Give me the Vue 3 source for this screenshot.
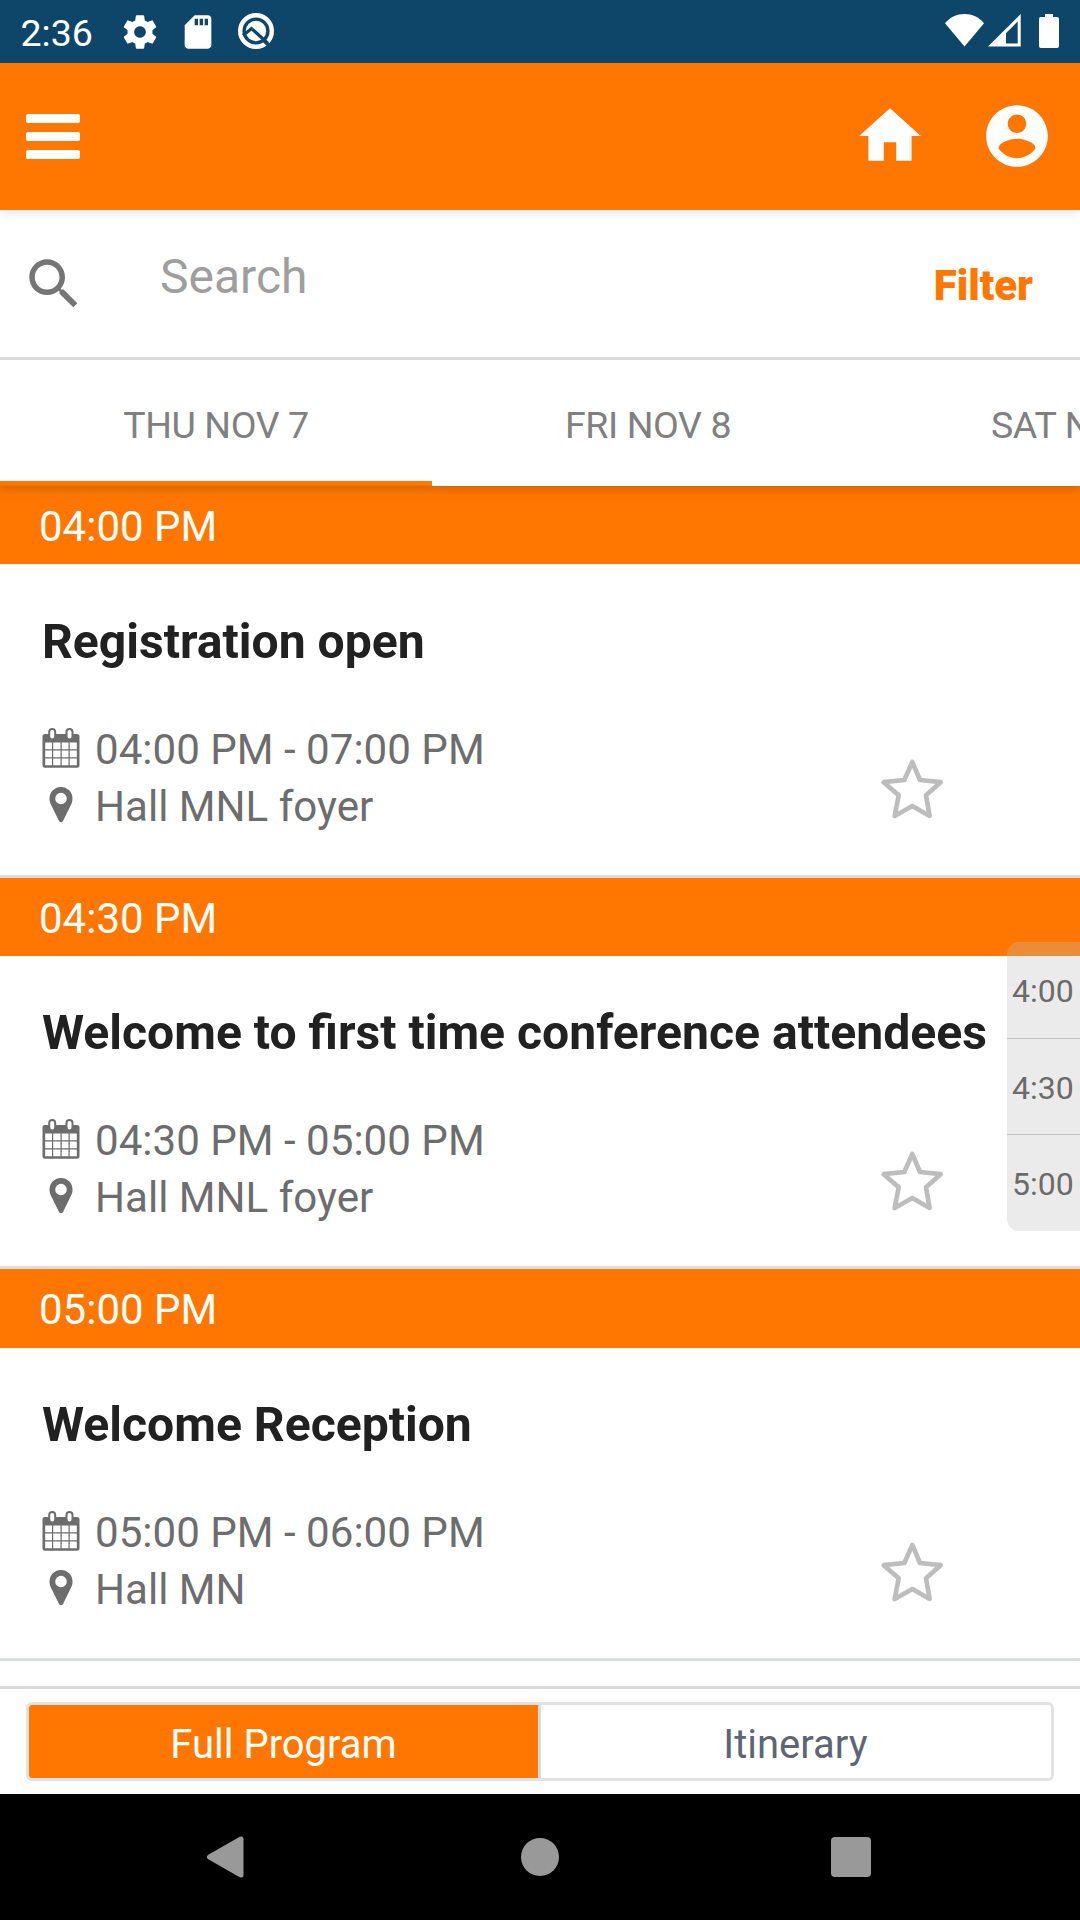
<script setup>
const days = ['THU NOV 7', 'FRI NOV 8', 'SAT NOV 9']
const sessions = [
  { start: '04:00 PM', title: 'Registration open', time: '04:00 PM - 07:00 PM', place: 'Hall MNL foyer' },
  { start: '04:30 PM', title: 'Welcome to first time conference attendees', time: '04:30 PM - 05:00 PM', place: 'Hall MNL foyer' },
  { start: '05:00 PM', title: 'Welcome Reception', time: '05:00 PM - 06:00 PM', place: 'Hall MN' }
]
const jumps = ['4:00', '4:30', '5:00']
</script>

<template>
  <div class="screen">
    <div class="status">
      <span class="clock">2:36</span>
      <svg class="gear" width="40" height="40" viewBox="0 0 24 24"><path d="M19.43 12.98c.04-.32.07-.64.07-.98s-.03-.66-.07-.98l2.11-1.65c.19-.15.24-.42.12-.64l-2-3.46c-.12-.22-.39-.3-.61-.22l-2.49 1c-.52-.4-1.08-.73-1.69-.98l-.38-2.65C14.46 2.18 14.25 2 14 2h-4c-.25 0-.46.18-.49.42l-.38 2.65c-.61.25-1.17.59-1.69.98l-2.49-1c-.23-.09-.49 0-.61.22l-2 3.46c-.13.22-.07.49.12.64l2.11 1.65c-.04.32-.07.65-.07.98s.03.66.07.98l-2.11 1.65c-.19.15-.24.42-.12.64l2 3.46c.12.22.39.3.61.22l2.49-1c.52.4 1.08.73 1.69.98l.38 2.65c.03.24.24.42.49.42h4c.25 0 .46-.18.49-.42l.38-2.65c.61-.25 1.17-.59 1.69-.98l2.49 1c.23.09.49 0 .61-.22l2-3.46c.12-.22.07-.49-.12-.64l-2.11-1.65zM12 15.5c-1.93 0-3.5-1.57-3.5-3.5s1.57-3.5 3.5-3.5 3.5 1.57 3.5 3.5-1.57 3.5-3.5 3.5z"/></svg>
      <svg class="sd" width="40" height="40" viewBox="0 0 24 24"><path d="M18 2h-8L4.02 8 4 20c0 1.1.9 2 2 2h12c1.1 0 2-.9 2-2V4c0-1.1-.9-2-2-2zm-6 6h-2V4h2v4zm3 0h-2V4h2v4zm3 0h-2V4h2v4z"/></svg>
      <svg class="q" width="38" height="38" viewBox="0 0 38 38">
        <circle cx="19" cy="19" r="15.8" fill="none" stroke="#fff" stroke-width="4.4"/>
        <circle cx="19" cy="19" r="10.2"/>
        <path d="M6 23.5 14.5 16.5 31 31.5" fill="none" stroke="#0e4669" stroke-width="3.2"/>
        <path d="M26 27.5 34 36" stroke="#0e4669" stroke-width="3.4"/>
      </svg>
      <svg class="wifi" width="39" height="33" viewBox="0 0 39 33"><path d="M19.5 32.5 0 9.2C5.2 3 12 0 19.5 0S33.8 3 39 9.2z"/></svg>
      <svg class="signal" width="33" height="33" viewBox="0 0 33 33"><path fill-rule="evenodd" d="M0 32.5 32.7 0V32.5zM18 29.5H29.7V7.5L18 19.2z"/></svg>
      <svg class="battery" width="20" height="34" viewBox="0 0 20 34"><path d="M6 0h8v3h4a2 2 0 0 1 2 2v27a2 2 0 0 1-2 2H2a2 2 0 0 1-2-2V5a2 2 0 0 1 2-2h4z"/></svg>
    </div>

    <header class="appbar">
      <div class="burger"><i></i><i></i><i></i></div>
      <svg class="home" width="74" height="74" viewBox="0 0 24 24"><path d="M10 20v-6h4v6h5v-8h3L12 3 2 12h3v8z"/></svg>
      <svg class="user" width="74" height="74" viewBox="0 0 24 24"><path d="M12 2C6.48 2 2 6.48 2 12s4.48 10 10 10 10-4.48 10-10S17.52 2 12 2zm0 3c1.66 0 3 1.34 3 3s-1.34 3-3 3-3-1.34-3-3 1.34-3 3-3zm0 14.2c-2.5 0-4.71-1.28-6-3.22.03-1.99 4-3.08 6-3.08 1.99 0 5.97 1.09 6 3.08-1.29 1.94-3.5 3.22-6 3.22z"/></svg>
    </header>

    <div class="search">
      <svg width="66" height="66" viewBox="0 0 24 24"><path d="M15.5 14h-.79l-.28-.27C15.41 12.59 16 11.11 16 9.5 16 5.91 13.09 3 9.5 3S3 5.91 3 9.5 5.91 16 9.5 16c1.61 0 3.09-.59 4.23-1.57l.27.28v.79l5 4.99L20.49 19l-4.99-5zm-6 0C7.01 14 5 11.99 5 9.5S7.01 5 9.5 5 14 7.01 14 9.5 11.99 14 9.5 14z"/></svg>
      <span class="placeholder">Search</span>
      <span class="filter">Filter</span>
    </div>

    <nav class="tabs">
      <div v-for="(d, i) in days" :key="d" class="tab" :class="{ active: i === 0 }">{{ d }}</div>
    </nav>

    <main class="list">
      <section v-for="s in sessions" :key="s.start" class="section">
        <div class="slot">{{ s.start }}</div>
        <div class="card">
          <h2>{{ s.title }}</h2>
          <div class="details">
            <div class="meta">
              <div class="row">
                <svg width="38" height="40" viewBox="0 0 38 40">
                  <path fill-rule="evenodd" d="M3 6H35Q37.5 6 37.5 8.5V37Q37.5 39.7 35 39.7H3Q.5 39.7 .5 37V8.5Q.5 6 3 6zM3.2 14.5V21.2H10V14.5zM11.2 14.5V21.2H18.5V14.5zM19.7 14.5V21.2H26.5V14.5zM27.7 14.5V21.2H34.8V14.5zM3.2 22.4V29.3H10V22.4zM11.2 22.4V29.3H18.5V22.4zM19.7 22.4V29.3H26.5V22.4zM27.7 22.4V29.3H34.8V22.4zM3.2 30.5V37.2H10V30.5zM11.2 30.5V37.2H18.5V30.5zM19.7 30.5V37.2H26.5V30.5zM27.7 30.5V37.2H34.8V30.5z"/>
                  <rect x="7.2" y="1" width="6" height="10.5" rx="3" fill="#fff" stroke="#6d6d6d" stroke-width="2"/>
                  <rect x="24.5" y="1" width="6" height="10.5" rx="3" fill="#fff" stroke="#6d6d6d" stroke-width="2"/>
                </svg>
                <span>{{ s.time }}</span>
              </div>
              <div class="row">
                <svg width="38" height="36" viewBox="0 0 38 36"><path fill-rule="evenodd" d="M19 0A11.5 11.5 0 0 1 30.5 11.5C30.5 14.5 29.8 16 29 17.8L21 34Q19 36.5 17 34L9 17.8C8.2 16 7.5 14.5 7.5 11.5A11.5 11.5 0 0 1 19 0zM19 5.7A5.8 5.8 0 1 0 19 17.3A5.8 5.8 0 1 0 19 5.7z"/></svg>
                <span>{{ s.place }}</span>
              </div>
            </div>
            <svg class="star" width="66.67" height="63.33" viewBox="118 82 200 190"><path d="M218 97 241 151 303 157.5 259 197 270 259 218 229 165 259 177 197 132 157.5 194 151z"/></svg>
          </div>
        </div>
      </section>
    </main>

    <footer class="bottom">
      <div class="segments">
        <div class="segment on">Full Program</div>
        <div class="segment">Itinerary</div>
      </div>
    </footer>

    <div class="navbar">
      <svg width="38" height="42" viewBox="0 0 38 42"><path d="M3.5 21 35 3V39z" stroke="#999" stroke-width="5" stroke-linejoin="round"/></svg>
      <svg width="38" height="38" viewBox="0 0 38 38"><circle cx="19" cy="19" r="19"/></svg>
      <svg width="40" height="40" viewBox="0 0 40 40"><rect width="40" height="40" rx="4"/></svg>
    </div>

    <aside class="jump">
      <div v-for="j in jumps" :key="j">{{ j }}</div>
    </aside>
  </div>
</template>

<style>
body { margin: 0; background: #fff; }
</style>

<style scoped>
.screen {
  position: relative;
  display: flex;
  flex-direction: column;
  width: 1080px;
  height: 1920px;
  overflow: hidden;
  background: #fff;
  font-family: Roboto, sans-serif;
  white-space: nowrap;
}
.screen * { box-sizing: border-box; }
svg { display: block; flex: none; }

.status {
  display: flex;
  align-items: flex-start;
  height: 63px;
  flex: none;
  background: #0e4669;
  color: #fff;
}
.status svg { fill: #fff; }
.clock { width: 100px; padding-left: 20.5px; font-size: 37.5px; line-height: 67px; }
.gear { margin: 12px 0 0 20px; }
.sd { margin: 12px 0 0 18px; }
.q { margin: 12px 0 0 19px; }
.wifi { margin: 14px 0 0 auto; }
.signal { margin: 14px 0 0 4px; }
.battery { margin: 14px 21px 0 18px; }

.appbar {
  position: relative;
  z-index: 1;
  display: flex;
  align-items: flex-start;
  height: 147px;
  flex: none;
  padding-left: 26px;
  background: #ff7700;
  box-shadow: 0 2px 10px rgba(0, 0, 0, .12);
  clip-path: inset(0 0 -20px 0);
}
.appbar svg { fill: #fff; margin-top: 36px; }
.burger { display: flex; flex-direction: column; gap: 9px; margin: 51px auto 0 0; }
.burger i { width: 54px; height: 9px; border-radius: 2px; background: #fff; }
.user { margin-left: 53px; margin-right: 26px; }

.search {
  display: flex;
  height: 150px;
  flex: none;
  padding: 0 47px 0 21px;
  border-bottom: 3px solid #dadada;
}
.search svg { fill: #757575; margin-top: 41px; }
.placeholder { margin-left: 73px; font-size: 48px; line-height: 134px; color: #9e9e9e; }
.filter { margin-left: auto; font-size: 42px; font-weight: 900; line-height: 152px; color: #ff7700; }

.tabs {
  position: relative;
  z-index: 1;
  display: flex;
  height: 126px;
  flex: none;
  background: #fff;
  box-shadow: 0 3px 10px rgba(0, 0, 0, .18);
  clip-path: inset(0 0 -20px 0);
}
.tab {
  width: 432px;
  flex: none;
  text-align: center;
  font-size: 37.5px;
  letter-spacing: -.4px;
  line-height: 131px;
  color: #808080;
}
.tab.active { border-bottom: 5px solid #ff7700; }

.section { height: 391.67px; }
.slot {
  height: 78.4px;
  padding-left: 39px;
  background: #ff7700;
  color: #fff;
  font-size: 42px;
  line-height: 81px;
}
.card { height: 313.27px; padding: 47.3px 134px 0 42px; border-bottom: 3px solid #dadcdf; }
h2 { margin: 0; font-size: 48.1px; font-weight: 700; line-height: 60px; color: #212121; }
.details { display: flex; justify-content: space-between; padding-top: 49px; }
.row { display: flex; align-items: center; gap: 15px; height: 57px; font-size: 42.1px; line-height: 57px; color: #6d6d6d; }
.row svg { fill: #6d6d6d; }
.row:first-child svg { margin-bottom: 3px; }
.row:last-child svg { margin-bottom: 3px; }
.star { margin-top: 36.2px; fill: none; stroke: #bdbdbd; stroke-width: 14px; stroke-linejoin: round; }

.bottom {
  height: 108px;
  margin-top: 25px;
  flex: none;
  padding: 13px 26px 0;
  border-top: 3px solid #dadada;
}
.segments { display: flex; height: 79px; border: 3px solid #e2e2e2; border-radius: 6px; overflow: hidden; }
.segment { flex: 1; padding-right: 1px; text-align: center; font-size: 40px; line-height: 79px; color: #5d6572; }
.segment.on { padding: 0; background: #ff7700; color: #fff; border-right: 3px solid #d5dadf; flex: none; width: 512px; }

.navbar { display: flex; align-items: center; height: 126px; flex: none; padding-left: 206px; background: #000; }
.navbar svg { fill: #999; }
.navbar svg:nth-child(2) { margin-left: 277px; }
.navbar svg:nth-child(3) { margin-left: 272px; }

.jump {
  position: absolute;
  z-index: 2;
  top: 942px;
  right: 0;
  width: 73px;
  height: 289px;
  border-radius: 12px 0 0 12px;
  background: rgba(188, 188, 188, .3);
  color: #6b6b6b;
  font-size: 32px;
}
.jump div { height: 96px; padding-left: 5px; line-height: 98px; }
.jump div + div { border-top: 1px solid #c4c4c4; }
</style>
